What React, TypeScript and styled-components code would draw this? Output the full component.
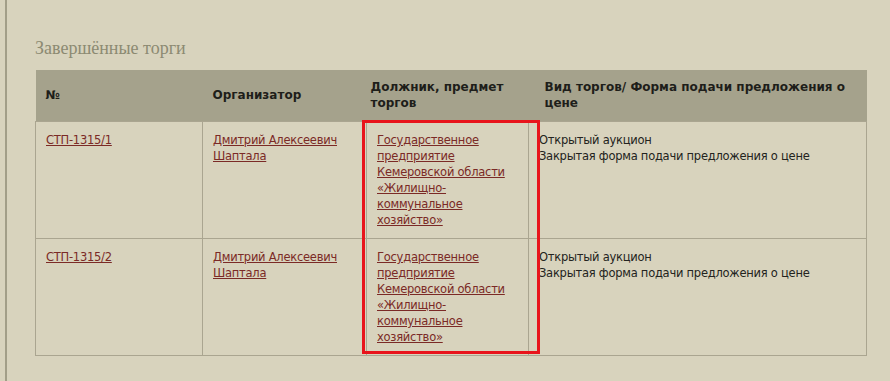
import React from 'react'
import styled, { createGlobalStyle } from 'styled-components'

type LotT = {
  num: string,
  organizer: string,
  debtor: string[],
  kind: string,
  form: string
}

const lots: Array<LotT> = [
  {
    num: 'СТП-1315/1',
    organizer: 'Дмитрий Алексеевич Шаптала',
    debtor: ['Государственное', 'предприятие', 'Кемеровской области', '«Жилищно-', 'коммунальное', 'хозяйство»'],
    kind: 'Открытый аукцион',
    form: 'Закрытая форма подачи предложения о цене'
  },
  {
    num: 'СТП-1315/2',
    organizer: 'Дмитрий Алексеевич Шаптала',
    debtor: ['Государственное', 'предприятие', 'Кемеровской области', '«Жилищно-', 'коммунальное', 'хозяйство»'],
    kind: 'Открытый аукцион',
    form: 'Закрытая форма подачи предложения о цене'
  }
]

const GlobalStyle = createGlobalStyle`
  body {
    margin: 0;
    background: #d8d3bd;
    font-family: "DejaVu Sans", Verdana, sans-serif;
  }
`

const Page = styled.div`
  margin-left: 5px;
  border-left: 2px solid #a29e88;
  padding: 38px 0 27px 28px;
  min-height: 316px;
`

const Title = styled.h2`
  margin: 0 0 12px;
  font-family: "Liberation Serif", "Times New Roman", serif;
  font-weight: normal;
  font-size: 18px;
  line-height: 20px;
  color: #8c8a72;
`

const TableWrap = styled.div`
  position: relative;
  width: 831px;
`

const Table = styled.table`
  width: 831px;
  border-collapse: collapse;
  table-layout: fixed;
  font-size: 12px;
  line-height: 16px;
`

const Th = styled.th<{ $w: number, $pl?: number }>`
  box-sizing: border-box;
  width: ${p => p.$w}px;
  background: #a5a28c;
  color: #1e1e1a;
  text-align: left;
  font-weight: bold;
  padding: 9px 10px 10px ${p => p.$pl ?? 10}px;
  vertical-align: middle;
`

const Td = styled.td`
  border: 1px solid #aaa590;
  padding: 10px;
  vertical-align: top;
  color: #232320;
  font-size: 11.5px;
  letter-spacing: -0.25px;
`

const Link = styled.a`
  color: #7b2a26;
  text-decoration: underline;
`

const Highlight = styled.div`
  position: absolute;
  left: 327px;
  top: 50px;
  width: 178px;
  height: 234px;
  box-sizing: border-box;
  border: 3px solid #e8141b;
  pointer-events: none;
`

const App: React.FC = () => {
  return (
    <Page>
      <GlobalStyle />
      <Title>Завершённые торги</Title>
      <TableWrap>
        <Table>
          <thead>
            <tr>
              <Th $w={167}>№</Th>
              <Th $w={164}>Организатор</Th>
              <Th $w={162} $pl={4}>Должник, предмет торгов</Th>
              <Th $w={338} $pl={16}>Вид торгов/ Форма подачи предложения о цене</Th>
            </tr>
          </thead>
          <tbody>
            {lots.map(lot => (
              <tr key={lot.num}>
                <Td><Link href="#">{lot.num}</Link></Td>
                <Td><Link href="#">{lot.organizer}</Link></Td>
                <Td>
                  <Link href="#">
                    {lot.debtor.map((line, i) => (
                      <React.Fragment key={i}>{line}{i < lot.debtor.length - 1 && <br />}</React.Fragment>
                    ))}
                  </Link>
                </Td>
                <Td>{lot.kind}<br />{lot.form}</Td>
              </tr>
            ))}
          </tbody>
        </Table>
        <Highlight />
      </TableWrap>
    </Page>
  )
}

export default App
